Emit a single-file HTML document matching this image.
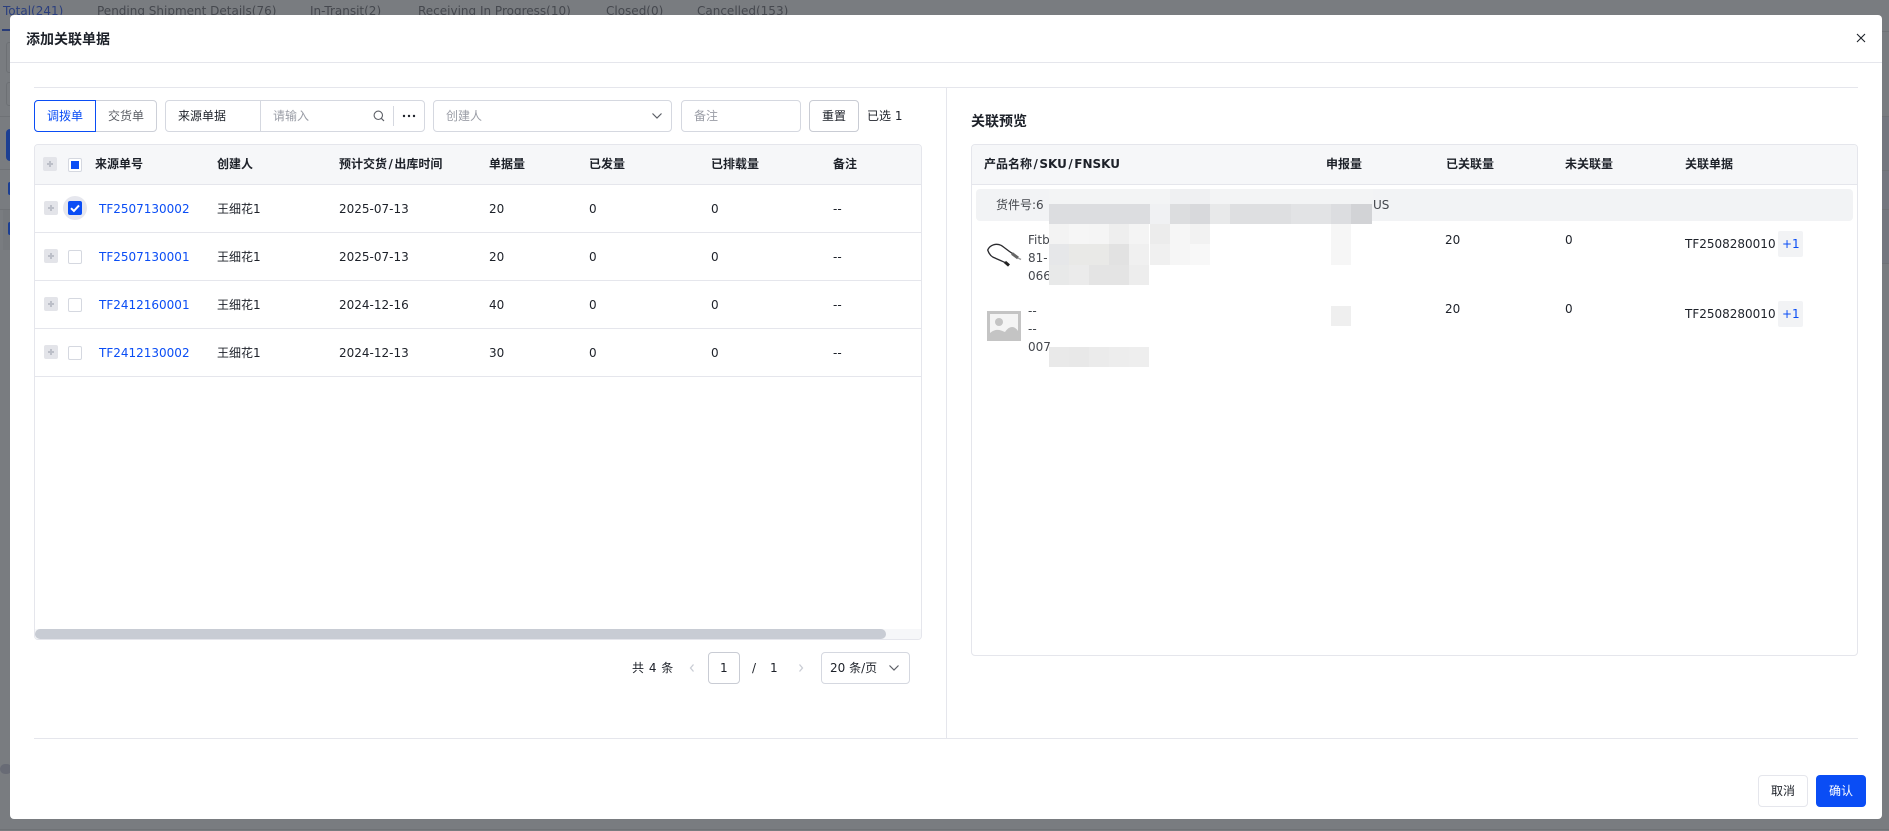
<!DOCTYPE html>
<html><head><meta charset="utf-8"><style>
*{box-sizing:border-box}
html,body{margin:0;padding:0;width:1889px;height:831px;overflow:hidden;background:#797c80}
body{position:relative;font-family:"DejaVu Sans","Noto Sans CJK SC",sans-serif;font-size:12px;color:#1d2129}
.a{position:absolute}
.t{position:absolute;white-space:nowrap;line-height:18px;height:18px}
.b{font-weight:700}
.box{position:absolute;border:1px solid #d5d8e0;border-radius:4px;background:#fff}
.ln{position:absolute;background:#e5e6ec;height:1px}
.link{color:#0a4df5}
.g{color:#9a9da6}
.tab{position:absolute;top:1px;white-space:nowrap;font-size:12px;line-height:20px;color:#45484e}
.bg{position:absolute;background:#6f7276;height:1px}
.ex{position:absolute;width:14px;height:14px;background:#e3e4e9;border-radius:2px}
.ex:before{content:"";position:absolute;left:4px;top:6px;width:6px;height:2px;background:#bcbfc8}
.ex:after{content:"";position:absolute;left:6px;top:4px;width:2px;height:6px;background:#bcbfc8}
.cb{position:absolute;width:14px;height:14px;border:1px solid #d5d8e0;border-radius:2px;background:#fff}
.p{position:absolute;height:20.4px;width:20.2px}
.s{margin:0 1.5px}
</style></head><body>
<div class="tab link" style="left:3px;color:#2b3f7e">Total(241)</div>
<div class="tab" style="left:97px">Pending Shipment Details(76)</div>
<div class="tab" style="left:310px">In-Transit(2)</div>
<div class="tab" style="left:418px">Receiving In Progress(10)</div>
<div class="tab" style="left:606px">Closed(0)</div>
<div class="tab" style="left:697px">Cancelled(153)</div>
<div class="a" style="left:2px;top:29px;width:8px;height:2px;background:#293c78"></div>
<div class="a" style="left:6px;top:42px;width:10px;height:31px;border:1px solid #6d7074;border-radius:3px"></div>
<div class="a" style="left:6px;top:82px;width:10px;height:24px;border:1px solid #6d7074;border-radius:3px"></div>
<div class="bg" style="left:0;top:116px;width:10px"></div>
<div class="a" style="left:6px;top:129px;width:10px;height:32px;background:#1c3f93;border-radius:4px"></div>
<div class="bg" style="left:0;top:169px;width:10px"></div>
<div class="a" style="left:8px;top:182px;width:6px;height:13px;background:#1c3f93;border-radius:2px"></div>
<div class="bg" style="left:0;top:209px;width:10px"></div>
<div class="a" style="left:3px;top:210px;width:7px;height:40px;background:#75787c"></div>
<div class="a" style="left:8px;top:222px;width:6px;height:13px;background:#1c3f93;border-radius:2px"></div>
<div class="a" style="left:0;top:764px;width:12px;height:10px;background:#686b75;border-radius:5px"></div>
<div class="bg" style="left:1882px;top:31px;width:7px"></div>
<div class="a" style="left:1882px;top:116px;width:7px;height:147px;background:#74777f"></div>
<div class="bg" style="left:1882px;top:116px;width:7px"></div>
<div class="bg" style="left:1882px;top:170px;width:7px"></div>
<div class="bg" style="left:1882px;top:209px;width:7px"></div>
<div class="bg" style="left:1882px;top:263px;width:7px"></div>
<div class="bg" style="left:0;top:829px;width:1889px"></div>

<div class="a" style="left:10px;top:15px;width:1872px;height:804px;background:#fff;border-radius:4px"></div>
<div class="t b" style="left:26px;top:31px;font-size:14px">添加关联单据</div>
<svg class="a" style="left:1855px;top:32px" width="12" height="12" viewBox="0 0 12 12"><path d="M2 2L10 10M10 2L2 10" stroke="#1d2129" stroke-width="1.1" fill="none"/></svg>
<div class="ln" style="left:10px;top:62px;width:1872px"></div>
<div class="ln" style="left:34px;top:87px;width:1824px"></div>
<div class="a" style="left:946px;top:87px;width:1px;height:651px;background:#e5e6ec"></div>
<div class="ln" style="left:34px;top:738px;width:1824px"></div>

<div class="box" style="left:95px;top:100px;width:62px;height:32px;border-radius:0 4px 4px 0;border-color:#cdd0d8"></div>
<div class="box" style="left:34px;top:100px;width:62px;height:32px;border-color:#0a4df5;border-radius:4px 0 0 4px"></div>
<div class="t link" style="left:47px;top:107px">调拨单</div>
<div class="t" style="left:108px;top:107px;color:#5c5f66">交货单</div>
<div class="box" style="left:165px;top:100px;width:260px;height:32px"></div>
<div class="a" style="left:260px;top:101px;width:1px;height:30px;background:#d5d8e0"></div>
<div class="t" style="left:178px;top:107px">来源单据</div>
<div class="t g" style="left:273px;top:107px">请输入</div>
<svg class="a" style="left:372px;top:109px" width="14" height="14" viewBox="0 0 14 14"><circle cx="6.3" cy="6.3" r="4.2" stroke="#5c5f66" stroke-width="1.1" fill="none"/><path d="M9.4 9.4L12 12" stroke="#5c5f66" stroke-width="1.2"/></svg>
<div class="a" style="left:393px;top:106px;width:1px;height:20px;background:#d5d8e0"></div>
<svg class="a" style="left:402px;top:113px" width="14" height="6" viewBox="0 0 14 6"><circle cx="2" cy="3" r="1.2" fill="#1d2129"/><circle cx="7" cy="3" r="1.2" fill="#1d2129"/><circle cx="12" cy="3" r="1.2" fill="#1d2129"/></svg>
<div class="box" style="left:433px;top:100px;width:239px;height:32px"></div>
<div class="t g" style="left:446px;top:107px">创建人</div>
<svg class="a" style="left:651px;top:112px" width="12" height="8" viewBox="0 0 12 8"><path d="M1.5 1.5L6 6L10.5 1.5" stroke="#5c5f66" stroke-width="1.2" fill="none"/></svg>
<div class="box" style="left:681px;top:100px;width:120px;height:32px"></div>
<div class="t g" style="left:694px;top:107px">备注</div>
<div class="box" style="left:809px;top:100px;width:50px;height:32px;border-color:#c9ccd4"></div>
<div class="t" style="left:822px;top:107px">重置</div>
<div class="t" style="left:867px;top:107px">已选 1</div>

<!-- left table -->
<div class="a" style="left:34px;top:144px;width:888px;height:496px;border:1px solid #e5e6ec;border-radius:4px;background:#fff;overflow:hidden">
  <div class="a" style="left:0;top:0;width:886px;height:39px;background:#f6f7f9"></div>
  <div class="a" style="left:0;top:484px;width:886px;height:10px;background:#f6f7f9"></div>
  <div class="a" style="left:0;top:484px;width:851px;height:10px;background:#c8ccd4;border-radius:5px"></div>
</div>
<div class="ln" style="left:35px;top:184px;width:886px"></div>
<div class="ln" style="left:35px;top:232px;width:886px"></div>
<div class="ln" style="left:35px;top:280px;width:886px"></div>
<div class="ln" style="left:35px;top:328px;width:886px"></div>
<div class="ln" style="left:35px;top:376px;width:886px"></div>

<div class="ex" style="left:43px;top:157px"></div>
<div class="cb" style="left:68px;top:158px"></div>
<div class="a" style="left:71px;top:161px;width:8px;height:8px;background:#0a4df5"></div>
<div class="t b" style="left:95px;top:155px">来源单号</div>
<div class="t b" style="left:217px;top:155px">创建人</div>
<div class="t b" style="left:339px;top:155px">预计交货<span class="s">/</span>出库时间</div>
<div class="t b" style="left:489px;top:155px">单据量</div>
<div class="t b" style="left:589px;top:155px">已发量</div>
<div class="t b" style="left:711px;top:155px">已排载量</div>
<div class="t b" style="left:833px;top:155px">备注</div>

<div class="ex" style="left:44px;top:201px"></div>
<div class="a" style="left:63px;top:196px;width:24px;height:24px;border-radius:50%;background:#e6e7ee"></div>
<div class="a" style="left:68px;top:201px;width:14px;height:14px;border-radius:2px;background:#0a4df5"></div>
<svg class="a" style="left:68px;top:201px" width="14" height="14" viewBox="0 0 14 14"><path d="M3 7.2L5.9 10L11 4.4" stroke="#fff" stroke-width="2" fill="none"/></svg>
<div class="t link" style="left:99px;top:200px">TF2507130002</div>
<div class="t" style="left:217px;top:200px">王细花1</div>
<div class="t" style="left:339px;top:200px">2025-07-13</div>
<div class="t" style="left:489px;top:200px">20</div>
<div class="t" style="left:589px;top:200px">0</div>
<div class="t" style="left:711px;top:200px">0</div>
<div class="t" style="left:833px;top:200px">--</div>

<div class="ex" style="left:44px;top:249px"></div>
<div class="cb" style="left:68px;top:250px"></div>
<div class="t link" style="left:99px;top:248px">TF2507130001</div>
<div class="t" style="left:217px;top:248px">王细花1</div>
<div class="t" style="left:339px;top:248px">2025-07-13</div>
<div class="t" style="left:489px;top:248px">20</div>
<div class="t" style="left:589px;top:248px">0</div>
<div class="t" style="left:711px;top:248px">0</div>
<div class="t" style="left:833px;top:248px">--</div>

<div class="ex" style="left:44px;top:297px"></div>
<div class="cb" style="left:68px;top:298px"></div>
<div class="t link" style="left:99px;top:296px">TF2412160001</div>
<div class="t" style="left:217px;top:296px">王细花1</div>
<div class="t" style="left:339px;top:296px">2024-12-16</div>
<div class="t" style="left:489px;top:296px">40</div>
<div class="t" style="left:589px;top:296px">0</div>
<div class="t" style="left:711px;top:296px">0</div>
<div class="t" style="left:833px;top:296px">--</div>

<div class="ex" style="left:44px;top:345px"></div>
<div class="cb" style="left:68px;top:346px"></div>
<div class="t link" style="left:99px;top:344px">TF2412130002</div>
<div class="t" style="left:217px;top:344px">王细花1</div>
<div class="t" style="left:339px;top:344px">2024-12-13</div>
<div class="t" style="left:489px;top:344px">30</div>
<div class="t" style="left:589px;top:344px">0</div>
<div class="t" style="left:711px;top:344px">0</div>
<div class="t" style="left:833px;top:344px">--</div>

<!-- pagination -->
<div class="t" style="left:632px;top:659px;word-spacing:1px">共 4 条</div>
<svg class="a" style="left:688px;top:663px" width="8" height="10" viewBox="0 0 8 10"><path d="M5.5 1.5L2.5 5L5.5 8.5" stroke="#c9ccd4" stroke-width="1.3" fill="none"/></svg>
<div class="box" style="left:708px;top:652px;width:32px;height:32px;border-color:#c9ccd4"></div>
<div class="t" style="left:720px;top:659px">1</div>
<div class="t" style="left:752px;top:659px">/</div>
<div class="t" style="left:770px;top:659px">1</div>
<svg class="a" style="left:797px;top:663px" width="8" height="10" viewBox="0 0 8 10"><path d="M2.5 1.5L5.5 5L2.5 8.5" stroke="#c9ccd4" stroke-width="1.3" fill="none"/></svg>
<div class="box" style="left:821px;top:652px;width:89px;height:32px"></div>
<div class="t" style="left:830px;top:659px">20 条/页</div>
<svg class="a" style="left:888px;top:664px" width="12" height="8" viewBox="0 0 12 8"><path d="M1.5 1.5L6 6L10.5 1.5" stroke="#5c5f66" stroke-width="1.2" fill="none"/></svg>

<!-- right panel -->
<div class="t b" style="left:971px;top:113px;font-size:14px">关联预览</div>
<div class="a" style="left:971px;top:144px;width:887px;height:512px;border:1px solid #e5e6ec;border-radius:4px;background:#fff;overflow:hidden">
  <div class="a" style="left:0;top:0;width:885px;height:39px;background:#f6f7f9"></div>
</div>
<div class="ln" style="left:972px;top:184px;width:885px"></div>
<div class="t b" style="left:984px;top:155px">产品名称<span class="s">/</span>SKU<span class="s">/</span>FNSKU</div>
<div class="t b" style="left:1326px;top:155px">申报量</div>
<div class="t b" style="left:1446px;top:155px">已关联量</div>
<div class="t b" style="left:1565px;top:155px">未关联量</div>
<div class="t b" style="left:1685px;top:155px">关联单据</div>

<div class="a" style="left:976px;top:189px;width:877px;height:32px;background:#f2f3f5;border-radius:4px"></div>
<div class="t" style="left:996px;top:196px;color:#44474d">货件号:6</div>
<div class="t" style="left:1373px;top:196px;color:#44474d">US</div>

<svg class="a" style="left:987px;top:243px" width="36" height="26" viewBox="0 0 36 26"><path d="M25.7 10.7C20 7 17 4 14 2.3C9 0 3 2 0.7 7C2 11 4 13 5.7 14C10 16 15 18 19 20" stroke="#2a2a2e" stroke-width="1.3" fill="none"/><path d="M18 19L22 22.5" stroke="#222" stroke-width="3"/><path d="M25 10.5L31 15" stroke="#666" stroke-width="3"/><path d="M31 15L34 16.5" stroke="#999" stroke-width="1.5"/></svg>
<div class="t" style="left:1028px;top:231px;color:#44474d">Fitb</div>
<div class="t" style="left:1028px;top:249px;color:#44474d">81-</div>
<div class="t" style="left:1028px;top:267px;color:#44474d">066</div>
<div class="t" style="left:1445px;top:231px">20</div>
<div class="t" style="left:1565px;top:231px">0</div>
<div class="t" style="left:1685px;top:235px">TF2508280010</div>
<div class="a" style="left:1778px;top:231px;width:25px;height:26px;background:#f2f3f5;border-radius:2px"></div>
<div class="t link" style="left:1782px;top:235px">+1</div>

<svg class="a" style="left:987px;top:311px" width="34" height="30" viewBox="0 0 34 30"><rect width="34" height="30" fill="#c4c4c4"/><rect x="3" y="3" width="28" height="24" fill="#f4f4f4"/><circle cx="12" cy="11" r="4" fill="#c4c4c4"/><path d="M3 27V22C9 17 13 19 18 21C22 15 27 14 31 20V27Z" fill="#c4c4c4"/></svg>
<div class="t" style="left:1028px;top:302px;color:#44474d">--</div>
<div class="t" style="left:1028px;top:320px;color:#44474d">--</div>
<div class="t" style="left:1028px;top:338px;color:#44474d">007</div>
<div class="t" style="left:1445px;top:300px">20</div>
<div class="t" style="left:1565px;top:300px">0</div>
<div class="t" style="left:1685px;top:305px">TF2508280010</div>
<div class="a" style="left:1778px;top:301px;width:25px;height:26px;background:#f2f3f5;border-radius:2px"></div>
<div class="t link" style="left:1782px;top:305px">+1</div>

<!-- pixelated blur -->
<div class="a" style="left:1049px;top:189px;width:324px;height:15px;background:#f3f4f5"></div>
<div class="a" style="left:1170px;top:189px;width:40px;height:15px;background:#eff0f2"></div>
<div class="a" style="left:1049px;top:204px;width:101px;height:20px;background:#dcdde0"></div>
<div class="a" style="left:1150px;top:204px;width:20px;height:20px;background:#f0f1f3"></div>
<div class="a" style="left:1170px;top:204px;width:20px;height:20px;background:#dcdddf"></div>
<div class="a" style="left:1190px;top:204px;width:20px;height:20px;background:#d8d9dc"></div>
<div class="a" style="left:1210px;top:204px;width:20px;height:20px;background:#e8e9ea"></div>
<div class="a" style="left:1230px;top:204px;width:61px;height:20px;background:#dedfe1"></div>
<div class="a" style="left:1291px;top:204px;width:40px;height:20px;background:#e2e3e5"></div>
<div class="a" style="left:1331px;top:204px;width:20px;height:20px;background:#dcdde0"></div>
<div class="a" style="left:1351px;top:204px;width:21px;height:20px;background:#d2d3d6"></div>

<div class="p" style="left:1049px;top:224px;background:#f3f3f3"></div>
<div class="p" style="left:1069px;top:224px;background:#f6f6f6"></div>
<div class="p" style="left:1089px;top:224px;background:#f5f5f5"></div>
<div class="p" style="left:1109px;top:224px;background:#eeeeee"></div>
<div class="p" style="left:1129px;top:224px;background:#f4f4f4"></div>
<div class="p" style="left:1150px;top:224px;background:#ececec"></div>
<div class="p" style="left:1170px;top:224px;background:#f6f6f6"></div>
<div class="p" style="left:1190px;top:224px;background:#f2f2f2"></div>
<div class="p" style="left:1331px;top:224px;background:#f6f6f6"></div>

<div class="p" style="left:1049px;top:244.4px;background:#e6e7e9"></div>
<div class="p" style="left:1069px;top:244.4px;background:#e9e9e7"></div>
<div class="p" style="left:1089px;top:244.4px;background:#e9e9e7"></div>
<div class="p" style="left:1109px;top:244.4px;background:#e2e2e2"></div>
<div class="p" style="left:1129px;top:244.4px;background:#f0f0f0"></div>
<div class="p" style="left:1150px;top:244.4px;background:#f0f0f0"></div>
<div class="p" style="left:1170px;top:244.4px;background:#f6f6f6"></div>
<div class="p" style="left:1190px;top:244.4px;background:#f8f8f8"></div>
<div class="p" style="left:1331px;top:244.4px;background:#f6f6f6"></div>

<div class="p" style="left:1049px;top:265px;background:#e8e9e9"></div>
<div class="p" style="left:1069px;top:265px;background:#ebebeb"></div>
<div class="p" style="left:1089px;top:265px;background:#e4e4e4"></div>
<div class="p" style="left:1109px;top:265px;background:#e4e4e4"></div>
<div class="p" style="left:1129px;top:265px;background:#ededed"></div>

<div class="p" style="left:1331px;top:306px;background:#efefef"></div>
<div class="p" style="left:1049px;top:346.6px;background:#e9e9e9"></div>
<div class="p" style="left:1069px;top:346.6px;background:#e8e8e8"></div>
<div class="p" style="left:1089px;top:346.6px;background:#ebebeb"></div>
<div class="p" style="left:1109px;top:346.6px;background:#ededed"></div>
<div class="p" style="left:1129px;top:346.6px;background:#eeeeee"></div>

<!-- footer -->
<div class="box" style="left:1758px;top:775px;width:50px;height:32px;border-color:#e5e6ec"></div>
<div class="t" style="left:1771px;top:782px">取消</div>
<div class="a" style="left:1816px;top:775px;width:50px;height:32px;background:#0a4df5;border-radius:4px"></div>
<div class="t" style="left:1829px;top:782px;color:#fff">确认</div>
</body></html>
